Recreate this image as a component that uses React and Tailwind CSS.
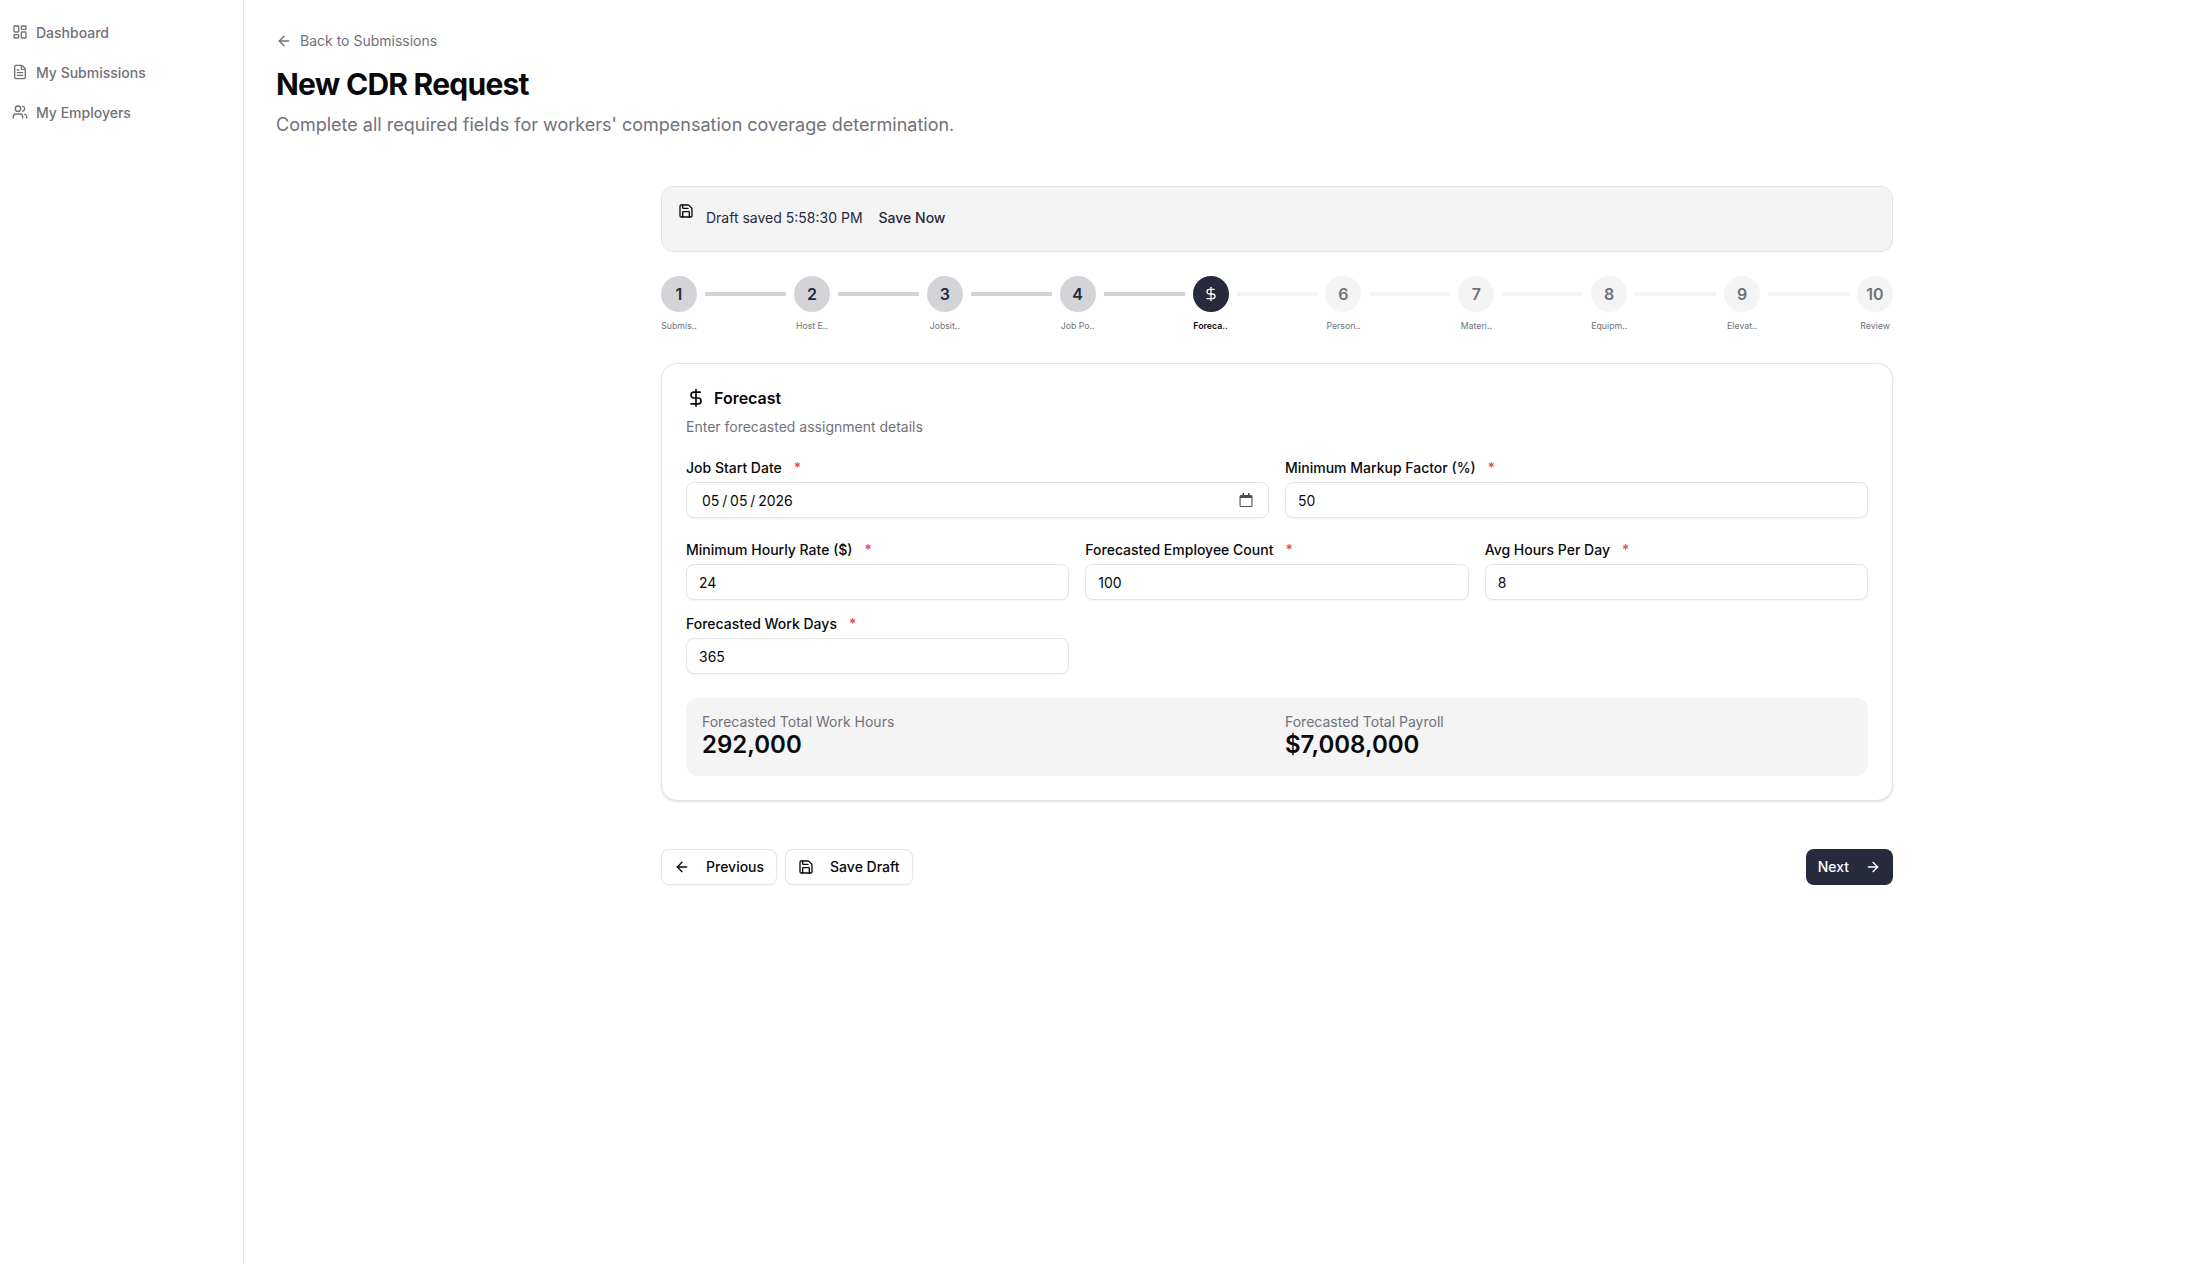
import React from "react";
import { LayoutDashboard, FileText, Users, ArrowLeft, ArrowRight, Save, DollarSign } from "lucide-react";

const nav = [
  ["Dashboard", LayoutDashboard],
  ["My Submissions", FileText],
  ["My Employers", Users],
];

const steps = [
  ["1", "Submis.."],
  ["2", "Host E.."],
  ["3", "Jobsit.."],
  ["4", "Job Po.."],
  ["$", "Foreca.."],
  ["6", "Person.."],
  ["7", "Materi.."],
  ["8", "Equipm.."],
  ["9", "Elevat.."],
  ["10", "Review"],
];

function Label({ children }) {
  return (
    <label className="flex items-center h-[14px] pt-[2px] text-sm leading-none font-medium text-[#09090b]">
      {children}
      <span className="ml-3 text-[#ef4444]">*</span>
    </label>
  );
}

function Field({ label, value }) {
  return (
    <div className="flex flex-col gap-2">
      <Label>{label}</Label>
      <input
        type="text"
        defaultValue={value}
        className="h-9 w-full rounded-lg border border-[#e4e4e7] bg-white px-3 pt-[1px] text-sm text-[#09090b] shadow-xs outline-none"
      />
    </div>
  );
}

function DateField({ label, value }) {
  return (
    <div className="flex flex-col gap-2">
      <Label>{label}</Label>
      <div className="flex h-9 w-full items-center justify-between rounded-lg border border-[#e4e4e7] bg-white pl-[15px] pr-[14px] text-sm text-[#09090b] shadow-xs">
        <span className="pt-[1px] [word-spacing:-1.1px]">{value}</span>
        <svg width="16" height="16" viewBox="0 0 16 16" className="mb-[1px] shrink-0">
          <path d="M4.5 1h1.5v2h4V1h1.5v2H13a1.5 1.5 0 0 1 1.5 1.5v9A1.5 1.5 0 0 1 13 15H3a1.5 1.5 0 0 1-1.5-1.5v-9A1.5 1.5 0 0 1 3 3h1.5z" fill="#4b4b50" />
          <rect x="2.6" y="6" width="10.8" height="7.9" rx="0.5" fill="#ffffff" />
        </svg>
      </div>
    </div>
  );
}

function Step({ n, label, index }) {
  const active = index === 4;
  const done = index < 4;
  const circle = active
    ? "bg-[#27293d] text-white"
    : done
    ? "bg-[#d4d4d8] text-[#27293d]"
    : "bg-[#f4f4f5] text-[#71717a]";
  return (
    <div className="flex w-9 shrink-0 flex-col items-center">
      <div className={`flex h-9 w-9 items-center justify-center rounded-full text-base font-semibold ${circle}`}>
        {active ? <DollarSign size={16} strokeWidth={2} /> : n}
      </div>
      <span
        className={`mt-2 whitespace-nowrap text-[8.75px] leading-[12px] ${
          active ? "font-semibold text-[#09090b]" : "text-[#71717a]"
        }`}
      >
        {label}
      </span>
    </div>
  );
}

export default function App() {
  return (
    <div className="flex min-h-[1264px] bg-white text-[#09090b] font-['Inter',sans-serif]">
      <aside className="w-[244px] shrink-0 border-r border-[#e4e4e7] pl-3 pt-[13px]">
        {nav.map(([label, Icon]) => (
          <div key={label} className="flex h-10 items-center gap-2 text-sm font-medium text-[#71717a]">
            <Icon size={16} strokeWidth={2} className="mb-[2px] shrink-0" />
            <span>{label}</span>
          </div>
        ))}
      </aside>

      <main className="flex-1 pl-8 pt-[31px]">
        <a className="flex h-5 items-center gap-2 text-sm text-[#71717a]">
          <ArrowLeft size={16} strokeWidth={2} />
          Back to Submissions
        </a>
        <h1 className="mt-[15px] text-[30px] leading-[36px] font-bold tracking-tight text-[#09090b]">New CDR Request</h1>
        <p className="mt-[9px] text-lg leading-7 text-[#71717a]">
          Complete all required fields for workers' compensation coverage determination.
        </p>

        <div className="ml-[385px] mt-[47px] w-[1232px]">
          <div className="flex h-[66px] items-start gap-3 rounded-xl border border-[#e4e4e7] bg-[#f4f4f5] pl-[16px] pt-[16px] text-sm">
            <Save size={16} strokeWidth={2} className="shrink-0" />
            <div className="flex h-[29px] items-center gap-4 text-[#27293d]">
              <span>Draft saved 5:58:30 PM</span>
              <span className="font-medium">Save Now</span>
            </div>
          </div>

          <div className="mt-6 flex items-start">
            {steps.map(([n, label], i) => (
              <React.Fragment key={n}>
                <Step n={n} label={label} index={i} />
                {i < steps.length - 1 && (
                  <div className={`mx-2 mt-4 h-1 flex-1 ${i < 4 ? "bg-[#d4d4d8]" : "bg-[#f4f4f5]"}`} />
                )}
              </React.Fragment>
            ))}
          </div>

          <section className="mt-[31px] rounded-2xl border border-[#e4e4e7] bg-white p-6 shadow-sm">
            <div className="flex h-5 items-center gap-2 text-base font-semibold">
              <DollarSign size={20} strokeWidth={2} />
              Forecast
            </div>
            <p className="mt-[9px] text-sm leading-5 text-[#71717a]">Enter forecasted assignment details</p>

            <div className="mt-[23px] grid grid-cols-2 gap-4">
              <DateField label="Job Start Date" value="05 / 05 / 2026" />
              <Field label="Minimum Markup Factor (%)" value="50" />
            </div>
            <div className="mt-6 grid grid-cols-3 gap-4">
              <Field label="Minimum Hourly Rate ($)" value="24" />
              <Field label="Forecasted Employee Count" value="100" />
              <Field label="Avg Hours Per Day" value="8" />
              <Field label="Forecasted Work Days" value="365" />
            </div>

            <div className="mt-6 grid grid-cols-2 gap-4 rounded-xl bg-[#f4f4f5] px-4 pt-[14px] pb-[18px]">
              <div>
                <p className="text-sm leading-5 text-[#71717a]">Forecasted Total Work Hours</p>
                <p className="text-2xl leading-[26px] font-semibold">292,000</p>
              </div>
              <div>
                <p className="text-sm leading-5 text-[#71717a]">Forecasted Total Payroll</p>
                <p className="text-2xl leading-[26px] font-semibold">$7,008,000</p>
              </div>
            </div>
          </section>

          <div className="mt-12 flex items-center justify-between">
            <div className="flex gap-2">
              <button className="flex h-9 items-center gap-4 rounded-lg border border-[#e4e4e7] bg-white px-3 text-sm font-medium shadow-xs">
                <ArrowLeft size={16} strokeWidth={2} />
                Previous
              </button>
              <button className="flex h-9 items-center gap-4 rounded-lg border border-[#e4e4e7] bg-white px-3 text-sm font-medium shadow-xs">
                <Save size={16} strokeWidth={2} />
                Save Draft
              </button>
            </div>
            <button className="flex h-9 items-center gap-4 rounded-lg bg-[#27293d] px-3 text-sm font-medium text-white">
              Next
              <ArrowRight size={16} strokeWidth={2} />
            </button>
          </div>
        </div>
      </main>
    </div>
  );
}
